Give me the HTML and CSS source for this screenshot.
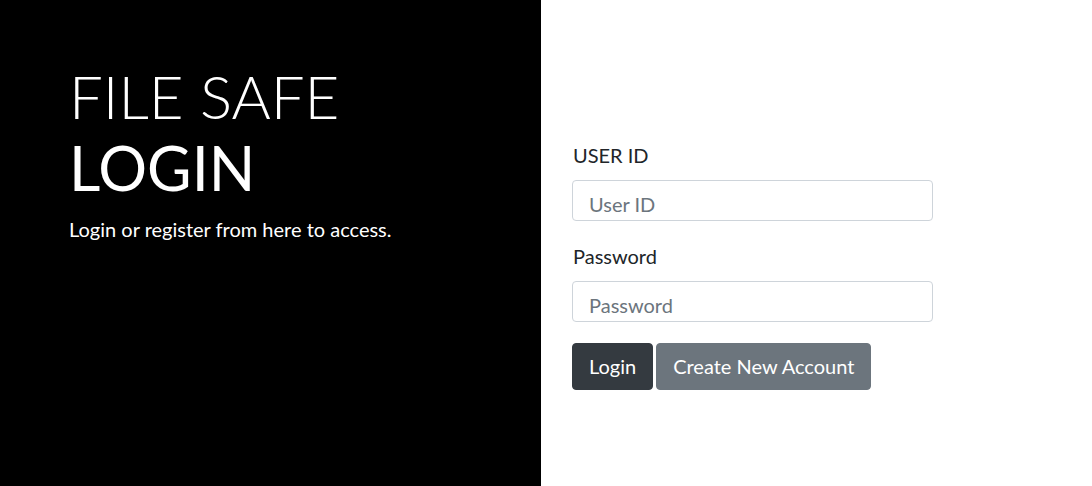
FILE: index.html
```html
<!DOCTYPE html>
<html>
<head>
<meta charset="utf-8">
<link rel="stylesheet" href="styles.css">
</head>
<body>
<div class="page">
  <div class="side">
    <h1 class="title"><span class="light">FILE SAFE</span><br><span class="strong">LOGIN</span></h1>
    <p class="lead">Login or register from here to access.</p>
  </div>
  <div class="main">
    <form class="form">
      <div class="group">
        <label class="label">USER ID</label>
        <input class="input" type="text" placeholder="User ID">
      </div>
      <div class="group">
        <label class="label">Password</label>
        <input class="input" type="password" placeholder="Password">
      </div>
      <div class="actions">
        <button type="button" class="btn btn-dark">Login</button>
        <button type="button" class="btn btn-secondary">Create New Account</button>
      </div>
    </form>
  </div>
</div>
</body>
</html>
```
FILE: styles.css
```css
* { box-sizing: border-box; }
html, body { margin: 0; padding: 0; }
body {
  font-family: Lato, "Open Sans", sans-serif;
  background: #fff;
  color: #212529;
}
.page {
  display: flex;
  height: 486px;
  overflow: hidden;
}
.side {
  width: 541px;
  flex: none;
  background: #000;
  color: #fff;
  padding: 60px 20px 0 69px;
}
.title {
  margin: 0;
  font-size: 60px;
  line-height: 72px;
  font-weight: 400;
}
.title .light { font-weight: 300; }
.title .strong { font-weight: 400; font-size: 61px; }
.lead {
  margin: 10px 0 0;
  font-size: 20px;
  line-height: 30px;
}
.main {
  flex: 1;
  padding: 140px 0 0 31px;
}
.form { width: 361px; }
.group { margin-bottom: 20px; }
.label {
  display: block;
  font-size: 20px;
  line-height: 30px;
  margin-bottom: 10px;
  padding-left: 1px;
}
.input {
  display: block;
  width: 100%;
  height: 41px;
  padding: 6px 16px 0;
  font-family: inherit;
  font-size: 20px;
  color: #495057;
  background: #fff;
  border: 1px solid #ced4da;
  border-radius: 4px;
  outline: none;
}
.input::placeholder { color: #6c757d; }
.actions {
  display: flex;
  gap: 3px;
  margin-top: 21px;
}
.btn {
  font-family: inherit;
  font-size: 20px;
  line-height: 30px;
  padding: 7px 16px 9px;
  height: 47px;
  border: 1px solid transparent;
  border-radius: 4px;
  color: #fff;
}
.btn-dark { background: #343a40; border-color: #343a40; }
.btn-secondary { background: #6c757d; border-color: #6c757d; }
```
